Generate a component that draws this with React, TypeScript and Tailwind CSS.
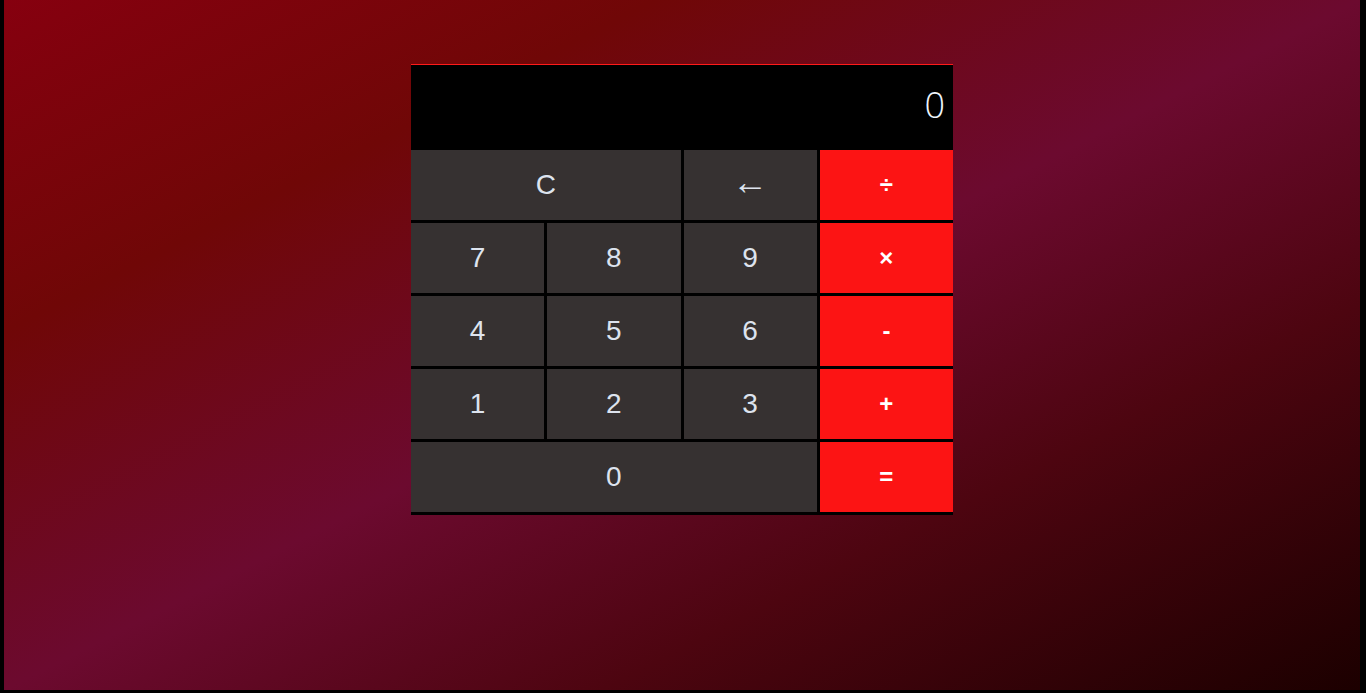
import React, { useState } from 'react';

type Key = {
  label: string;
  span?: number;
  op?: boolean;
  big?: boolean;
};

const keys: Key[] = [
  { label: 'C', span: 2 },
  { label: '←', big: true },
  { label: '÷', op: true },
  { label: '7' },
  { label: '8' },
  { label: '9' },
  { label: '×', op: true },
  { label: '4' },
  { label: '5' },
  { label: '6' },
  { label: '-', op: true },
  { label: '1' },
  { label: '2' },
  { label: '3' },
  { label: '+', op: true },
  { label: '0', span: 3 },
  { label: '=', op: true },
];

export default function App() {
  const [display, setDisplay] = useState('0');

  const press = (k: string) => {
    if (k === 'C') return setDisplay('0');
    if (k === '←') return setDisplay(display.length > 1 ? display.slice(0, -1) : '0');
    if (k === '=') {
      try {
        const expr = display.replace(/×/g, '*').replace(/÷/g, '/');
        // eslint-disable-next-line no-new-func
        const r = Function(`return (${expr})`)();
        setDisplay(String(r));
      } catch {
        setDisplay('Error');
      }
      return;
    }
    setDisplay(display === '0' && /\d/.test(k) ? k : display + k);
  };

  return (
    <div className="h-[693px] w-full bg-black pl-[4px] pr-[6px] pb-[3px]">
      <div className="h-full w-full bg-[linear-gradient(to_bottom_right,#86000f_0%,#700707_24%,#6c0a2f_50%,#4d0510_72%,#1c0000_100%)] pt-[64px]">
        <div className="mx-auto w-[542px] border-t border-[#ff1a1a]">
          <div className="flex h-[85px] items-center justify-end bg-black pr-[8px] pb-[5px] font-['Open_Sans',sans-serif] text-[36px] font-light text-[#eef5fc]">
            {display}
          </div>
          <div className="grid grid-cols-4 gap-[3px] bg-black pb-[3px]">
            {keys.map((k) => (
              <button
                key={k.label}
                onClick={() => press(k.label)}
                className={
                  'flex h-[70px] items-center justify-center font-["Liberation_Sans",Arial,sans-serif] ' +
                  (k.span === 2 ? 'col-span-2 ' : k.span === 3 ? 'col-span-3 ' : '') +
                  (k.op
                    ? 'bg-[#fc1414] text-[24px] font-bold text-white'
                    : k.big
                      ? 'bg-[#363131] pb-[6px] text-[36px] text-[#dde3ee]'
                      : 'bg-[#363131] text-[28px] text-[#dde3ee]')
                }
              >
                {k.label}
              </button>
            ))}
          </div>
        </div>
      </div>
    </div>
  );
}
